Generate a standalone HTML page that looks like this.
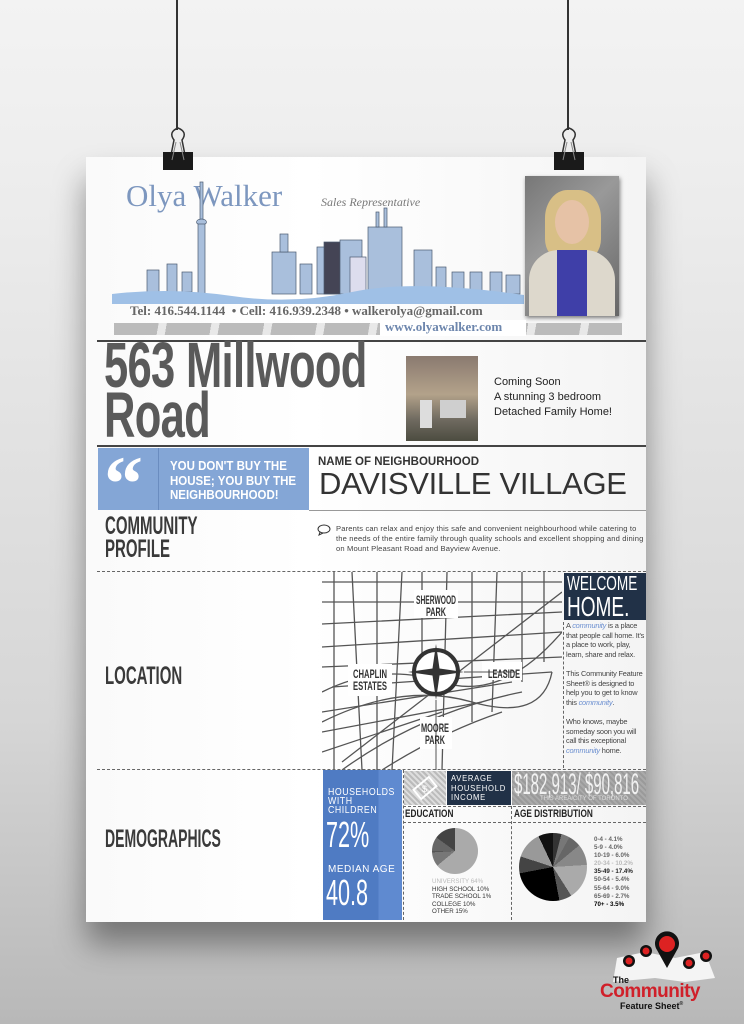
<!DOCTYPE html>
<html><head><meta charset="utf-8"><style>
*{margin:0;padding:0;box-sizing:border-box}
body{width:744px;height:1024px;overflow:hidden;position:relative;background:linear-gradient(#f3f3f3 0%,#ececec 20%,#d6d6d6 70%,#b8b8b8 100%);font-family:"Liberation Sans",sans-serif}
.a{position:absolute}
.cond{font-family:"Liberation Sans",sans-serif;font-weight:bold;transform-origin:left top;white-space:nowrap}
.poster{left:86px;top:157px;width:560px;height:765px;background:linear-gradient(90deg,#fafafa,#fff 40%,#f4f4f4);box-shadow:0 22px 30px rgba(0,0,0,.4)}
.dash{border-top:1.5px dashed #666;height:0}
</style></head><body>
<div class="a" style="left:176px;top:0;width:1.5px;height:130px;background:#333"></div>
<div class="a" style="left:567px;top:0;width:1.5px;height:130px;background:#333"></div>
<div class="poster a"></div>
<svg class="a" style="left:160px;top:120px" width="36" height="52"><path d="M10 40 L14 20 Q8 12 18 8 Q28 12 22 20 L26 40" fill="none" stroke="#333" stroke-width="1.5"/><rect x="3" y="32" width="30" height="18" fill="#1a1a1a"/><path d="M12 40 L16 22 M24 40 L20 22" stroke="#888" stroke-width="1"/></svg>
<svg class="a" style="left:551px;top:120px" width="36" height="52"><path d="M10 40 L14 20 Q8 12 18 8 Q28 12 22 20 L26 40" fill="none" stroke="#333" stroke-width="1.5"/><rect x="3" y="32" width="30" height="18" fill="#1a1a1a"/><path d="M12 40 L16 22 M24 40 L20 22" stroke="#888" stroke-width="1"/></svg>

<div class="a" style="left:126px;top:178px;font-family:'Liberation Serif',serif;font-size:31px;color:#7d97bf">Olya Walker</div>
<div class="a" style="left:321px;top:195px;font-family:'Liberation Serif',serif;font-style:italic;font-size:12px;color:#777">Sales Representative</div>
<svg class="a" style="left:112px;top:172px" width="412" height="132">
<g fill="#a9bfdc" stroke="#4a5a70" stroke-width="0.7">
<rect x="88" y="10" width="3" height="60"/><ellipse cx="89.5" cy="50" rx="5" ry="3"/><rect x="86" y="52" width="7" height="70"/>
<rect x="35" y="98" width="12" height="22"/><rect x="55" y="92" width="10" height="28"/><rect x="70" y="100" width="10" height="20"/>
<rect x="160" y="80" width="24" height="42"/><rect x="168" y="62" width="8" height="18"/>
<rect x="188" y="92" width="12" height="30"/><rect x="205" y="75" width="20" height="47"/>
<rect x="212" y="70" width="18" height="52" fill="#445"/>
<rect x="228" y="68" width="22" height="54"/><rect x="238" y="85" width="16" height="37" fill="#dde"/>
<rect x="256" y="55" width="34" height="67"/><rect x="264" y="40" width="3" height="15"/><rect x="272" y="36" width="3" height="19"/>
<rect x="302" y="78" width="18" height="44"/><rect x="324" y="95" width="10" height="27"/>
<rect x="340" y="100" width="12" height="22"/><rect x="358" y="100" width="12" height="22"/><rect x="378" y="100" width="12" height="22"/><rect x="394" y="103" width="14" height="19"/>
</g>
<path d="M0 122 Q60 115 120 124 T240 120 T412 123 L412 132 L0 132Z" fill="#9fc0e6"/>
</svg>
<div class="a" style="left:525px;top:176px;width:94px;height:140px;background:linear-gradient(135deg,#777 0%,#999 40%,#666 100%);box-shadow:1px 2px 4px rgba(0,0,0,.5);overflow:hidden">
<div class="a" style="left:20px;top:14px;width:56px;height:70px;border-radius:40% 40% 30% 30%;background:#d8bf86"></div>
<div class="a" style="left:30px;top:24px;width:34px;height:44px;border-radius:50%;background:#e6c2a6"></div>
<div class="a" style="left:4px;top:74px;width:86px;height:66px;border-radius:30px 30px 0 0;background:#ddd8cc"></div>
<div class="a" style="left:32px;top:74px;width:30px;height:66px;background:#3f3fa8"></div>
</div>
<div class="a" style="left:130px;top:303px;font-family:'Liberation Serif',serif;font-weight:bold;font-size:13px;color:#666;white-space:nowrap">Tel: 416.544.1144 &nbsp;• Cell: 416.939.2348 • walkerolya@gmail.com</div>
<div class="a" style="left:114px;top:323px;width:508px;height:12px;background:repeating-linear-gradient(100deg,#bbb 0 44px,#e8e8e8 44px 52px)"></div>
<div class="a" style="left:380px;top:320px;width:146px;height:16px;background:#fff"></div>
<div class="a" style="left:385px;top:319px;font-family:'Liberation Serif',serif;font-weight:bold;font-size:13px;color:#6d86ad">www.olyawalker.com</div>
<div class="a" style="left:97px;top:340px;width:549px;height:2px;background:#444"></div>

<div class="a cond" style="left:104px;top:340px;font-size:64px;line-height:50px;color:#5a5a5a;letter-spacing:-1px;transform:scaleX(.68)">563 Millwood<br>Road</div>
<div class="a" style="left:406px;top:356px;width:72px;height:85px;background:linear-gradient(#8a7a70 0%,#b3a28a 45%,#6f6a60 75%,#4c4c40 100%)">
<div class="a" style="left:14px;top:44px;width:12px;height:28px;background:#ddd"></div>
<div class="a" style="left:34px;top:44px;width:26px;height:18px;background:#cfcfcf"></div></div>
<div class="a" style="left:494px;top:375px;font-size:11px;line-height:15px;color:#222">Coming Soon<br>A stunning 3 bedroom<br>Detached Family Home!</div>
<div class="a" style="left:97px;top:445px;width:549px;height:2px;background:#444"></div>

<div class="a" style="left:98px;top:448px;width:211px;height:62px;background:#84a6d6"></div>
<div class="a" style="left:158px;top:448px;width:1px;height:62px;background:#6a8cbf"></div>
<div class="a" style="left:104px;top:445px;font-family:'Liberation Serif',serif;font-weight:bold;font-size:78px;line-height:78px;color:#fff">“</div>
<div class="a cond" style="left:170px;top:459px;font-size:12.5px;line-height:14.5px;color:#fff;transform:scaleX(.92)">YOU DON'T BUY THE<br>HOUSE; YOU BUY THE<br>NEIGHBOURHOOD!</div>
<div class="a" style="left:318px;top:456px;font-weight:bold;font-size:11.5px;color:#333">NAME OF NEIGHBOURHOOD</div>
<div class="a" style="left:319px;top:466px;font-size:31px;color:#333;letter-spacing:-.3px">DAVISVILLE VILLAGE</div>
<div class="a" style="left:309px;top:510px;width:337px;height:1px;background:#999"></div>

<div class="a cond" style="left:105px;top:515px;font-size:25px;line-height:23px;color:#3a3a3a;transform:scaleX(.6)">COMMUNITY<br>PROFILE</div>
<svg class="a" style="left:317px;top:524px" width="14" height="12"><ellipse cx="7" cy="5" rx="6" ry="4" fill="none" stroke="#333"/><path d="M3 8 L2 11 L6 9" fill="none" stroke="#333"/></svg>
<div class="a" style="left:336px;top:524px;width:310px;font-size:7.6px;line-height:9.8px;color:#444;letter-spacing:.15px">Parents can relax and enjoy this safe and convenient neighbourhood while catering to the needs of the entire family through quality schools and excellent shopping and dining on Mount Pleasant Road and Bayview Avenue.</div>
<div class="a dash" style="left:97px;top:571px;width:549px"></div>

<div class="a cond" style="left:105px;top:662px;font-size:25px;color:#3a3a3a;transform:scaleX(.6)">LOCATION</div>
<svg class="a" style="left:322px;top:572px" width="240" height="198">
<g stroke="#555" stroke-width="1.3" fill="none">
<path d="M0 10 H240 M0 30 H240 M0 52 L240 40 M0 75 L240 60 M0 95 L240 85 M10 115 L230 100 M0 140 L190 110 M0 160 L160 130 M20 190 L240 20 M0 180 L120 140"/>
<path d="M12 0 V198 M30 0 L40 198 M55 0 V198 M80 0 L70 198 M100 0 V120 M125 0 L120 198 M150 0 V150 M175 0 L170 140 M200 0 V110 M222 0 V90"/>
<path d="M0 120 Q60 90 120 110 T240 60 M0 150 Q80 110 150 130 T230 100 M20 198 Q100 140 200 120 M60 198 Q120 160 180 140"/>
</g>
<g fill="#fff"><rect x="92" y="18" width="44" height="28"/><rect x="26" y="92" width="44" height="32"/><rect x="160" y="90" width="40" height="18"/><rect x="98" y="145" width="32" height="32"/></g>
<circle cx="114" cy="100" r="22" fill="#fff" stroke="#333" stroke-width="4"/>
<path d="M114 72 L118 100 L114 128 L110 100Z M86 100 L114 96 L142 100 L114 104Z" fill="#333"/>
<path d="M114 128 V198 M142 100 H195" stroke="#555"/>
<g font-family="Liberation Sans,sans-serif" font-weight="bold" font-size="12" fill="#333" text-anchor="middle">
<text x="114" y="32" textLength="40" lengthAdjust="spacingAndGlyphs">SHERWOOD</text><text x="114" y="44" textLength="20" lengthAdjust="spacingAndGlyphs">PARK</text>
<text x="48" y="106" textLength="34" lengthAdjust="spacingAndGlyphs">CHAPLIN</text><text x="48" y="118" textLength="34" lengthAdjust="spacingAndGlyphs">ESTATES</text>
<text x="182" y="106" textLength="32" lengthAdjust="spacingAndGlyphs">LEASIDE</text>
<text x="113" y="160" textLength="28" lengthAdjust="spacingAndGlyphs">MOORE</text><text x="113" y="172" textLength="20" lengthAdjust="spacingAndGlyphs">PARK</text></g>
</svg>
<div class="a" style="left:564px;top:573px;width:82px;height:47px;background:#213147"></div>
<div class="a cond" style="left:567px;top:574px;font-size:20px;line-height:20px;color:#fff;font-weight:normal;transform:scaleX(.68)">WELCOME<br><span style="font-size:28px;line-height:26px">HOME.</span></div>
<div class="a" style="left:563px;top:622px;height:146px;border-left:1px dashed #666"></div>
<div class="a" style="left:566px;top:621px;width:80px;font-size:7.4px;line-height:9.6px;color:#444;letter-spacing:-.2px">A <i style="color:#6b8fd0">community</i> is a place that people call home. It's a place to work, play, learn, share and relax.<br><br>This Community Feature Sheet® is designed to help you to get to know this <i style="color:#6b8fd0">community</i>.<br><br>Who knows, maybe someday soon you will call this exceptional <i style="color:#6b8fd0">community</i> home.</div>
<div class="a dash" style="left:97px;top:769px;width:549px"></div>

<div class="a cond" style="left:105px;top:825px;font-size:25px;color:#3a3a3a;transform:scaleX(.56)">DEMOGRAPHICS</div>
<div class="a" style="left:323px;top:770px;width:79px;height:150px;background:linear-gradient(90deg,#4f7bc3 70%,#5f8ad0 70%)"></div>
<div class="a cond" style="left:328px;top:788px;font-size:10px;line-height:9px;color:#fff;letter-spacing:.6px;font-weight:normal;transform:scaleX(.88)">HOUSEHOLDS<br>WITH<br>CHILDREN</div>
<div class="a cond" style="left:326px;top:814px;font-size:36px;color:#fff;font-weight:normal;transform:scaleX(.6)">72%</div>
<div class="a" style="left:328px;top:864px;font-size:10px;color:#fff;letter-spacing:.5px">MEDIAN AGE</div>
<div class="a cond" style="left:326px;top:872px;font-size:36px;color:#fff;font-weight:normal;transform:scaleX(.6)">40.8</div>
<div class="a" style="left:403px;top:770px;height:150px;border-left:1.5px dashed #666"></div>
<div class="a" style="left:404px;top:771px;width:42px;height:34px;background:repeating-linear-gradient(45deg,#bbb 0 2px,#ddd 2px 4px)"></div>
<svg class="a" style="left:411px;top:775px" width="28" height="26"><rect x="4" y="7" width="20" height="12" transform="rotate(-40 14 13)" fill="none" stroke="#fff" stroke-width="2"/><text x="11" y="17" font-size="9" fill="#fff">$</text></svg>
<div class="a" style="left:447px;top:771px;width:64px;height:34px;background:#213147"></div>
<div class="a cond" style="left:451px;top:774px;font-size:8.5px;line-height:9.5px;color:#fff;letter-spacing:.8px;font-weight:normal;transform:scaleX(.9)">AVERAGE<br>HOUSEHOLD<br>INCOME</div>
<div class="a" style="left:512px;top:771px;width:134px;height:34px;background:repeating-linear-gradient(45deg,#9a9a9a 0 2px,#aaa 2px 4px)"></div>
<div class="a cond" style="left:514px;top:768px;font-size:30px;color:#f2f2f2;font-weight:normal;transform:scaleX(.5)">$182,913/ $90,816</div>
<div class="a" style="left:540px;top:796px;font-size:6px;color:#ddd">THIS AREA/CITY OF TORONTO</div>
<div class="a dash" style="left:403px;top:806px;width:243px"></div>
<div class="a cond" style="left:405px;top:808px;font-size:11px;color:#222;transform:scaleX(.75)">EDUCATION</div>
<div class="a cond" style="left:514px;top:808px;font-size:11px;color:#222;transform:scaleX(.75)">AGE DISTRIBUTION</div>
<div class="a" style="left:511px;top:806px;height:114px;border-left:1.5px dashed #666"></div>
<div class="a dash" style="left:403px;top:822px;width:243px"></div>
<div class="a" style="left:432px;top:828px;width:46px;height:46px;border-radius:50%;background:conic-gradient(#aaa 0 64%,#777 64% 74%,#555 74% 75%,#666 75% 85%,#444 85%)"></div>
<div class="a" style="left:432px;top:878px;font-size:6.2px;line-height:7.6px;color:#333">
<span style="color:#bbb">UNIVERSITY 64%</span><br>HIGH SCHOOL 10%<br>TRADE SCHOOL 1%<br>COLLEGE 10%<br>OTHER 15%</div>
<div class="a" style="left:519px;top:833px;width:68px;height:68px;border-radius:50%;background:conic-gradient(#333 0 4%,#777 4% 8%,#666 8% 14%,#888 14% 24%,#aaa 24% 41%,#555 41% 47%,#000 47% 72%,#444 72% 80%,#999 80% 93%,#111 93%)"></div>
<div class="a" style="left:594px;top:836px;font-size:6.2px;line-height:8.1px;color:#666;font-weight:bold">0-4 - 4.1%<br>5-9 - 4.0%<br>10-19 - 6.0%<br><span style="color:#bbb">20-34 - 10.2%</span><br><span style="color:#222">35-49 - 17.4%</span><br>50-54 - 5.4%<br>55-64 - 9.0%<br>65-69 - 2.7%<br><span style="color:#000">70+ - 3.5%</span></div>

<svg class="a" style="left:605px;top:930px" width="120" height="54">
<path d="M12 28 L40 22 L70 28 L100 22 L110 48 L80 52 L50 48 L8 52Z" fill="#f4f4f4"/>
<g fill="#111"><path d="M62 38 L52 20 A12 12 0 1 1 72 20Z"/><circle cx="24" cy="31" r="6"/><circle cx="41" cy="21" r="6"/><circle cx="84" cy="33" r="6"/><circle cx="101" cy="26" r="6"/></g>
<circle cx="62" cy="14" r="8" fill="#d22"/><g fill="#d22"><circle cx="24" cy="31" r="3.5"/><circle cx="41" cy="21" r="3.5"/><circle cx="84" cy="33" r="3.5"/><circle cx="101" cy="26" r="3.5"/></g>
</svg>
<div class="a" style="left:613px;top:975px;font-size:9px;font-weight:bold;color:#111">The</div>
<div class="a" style="left:600px;top:981px;font-size:19px;font-weight:bold;color:#d0202a;letter-spacing:-.5px">Community</div>
<div class="a" style="left:620px;top:1001px;font-size:9px;font-weight:bold;color:#111">Feature Sheet<sup style="font-size:5px">®</sup></div>
</body></html>
